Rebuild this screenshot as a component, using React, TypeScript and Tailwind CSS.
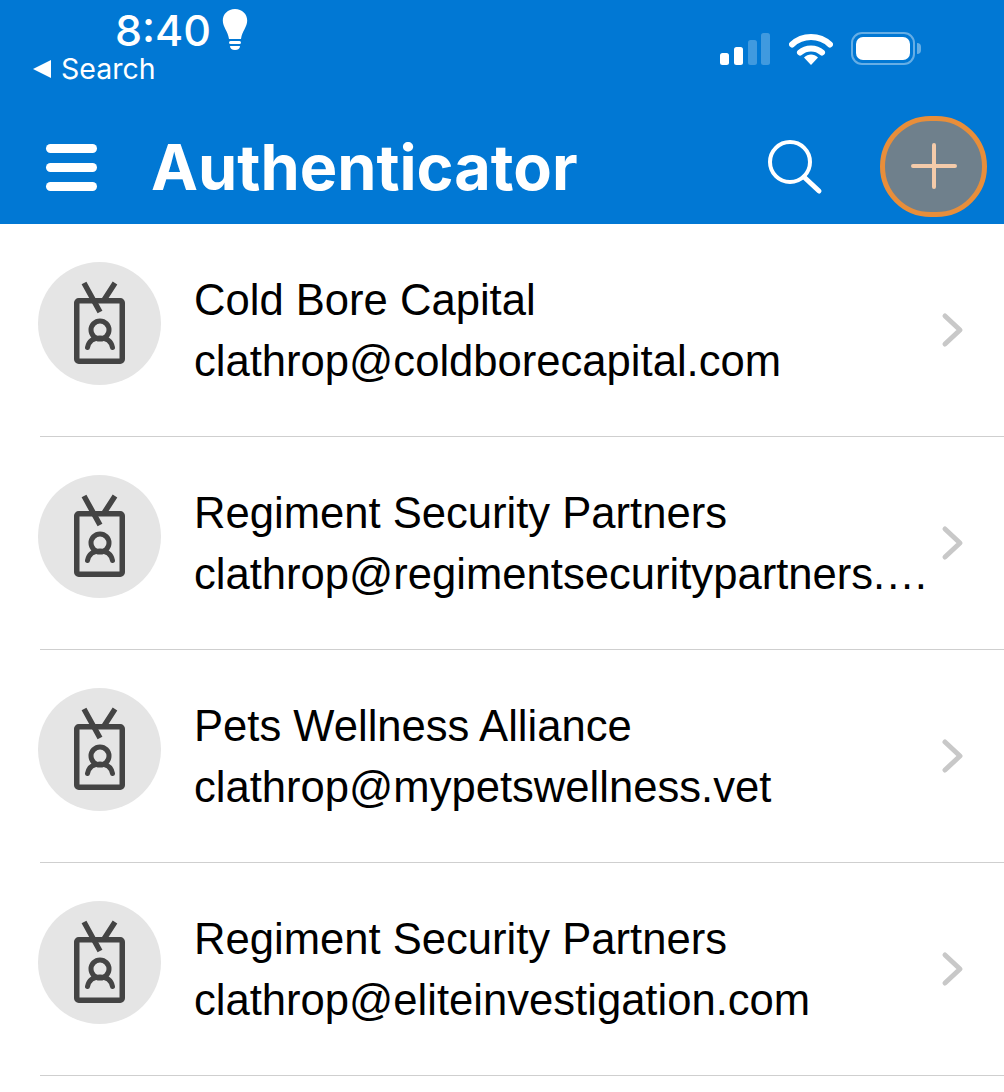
const accounts = [
    { name: 'Cold Bore Capital', email: 'clathrop@coldborecapital.com' },
    { name: 'Regiment Security Partners', email: 'clathrop@regimentsecuritypartners.com' },
    { name: 'Pets Wellness Alliance', email: 'clathrop@mypetswellness.vet' },
    { name: 'Regiment Security Partners', email: 'clathrop@eliteinvestigation.com' },
];

function Bulb() {
    return (
        <svg width="26" height="42" viewBox="0 0 26 42" className="block">
            <path d="M13 0C5.800 0 .8 5.200.8 11.600c0 6.600 5 10.400 6.200 18.400h12c1.200-8 6.200-11.800 6.200-18.400C25.200 5.200 20.200 0 13 0Z" fill="white" />
            <rect x="7" y="32" width="12" height="3" rx="1.500" fill="white" />
            <path d="M8 37h10c0 2.500-2 4-5 4s-5-1.500-5-4Z" fill="white" />
        </svg>
    );
}

function Signal() {
    return (
        <svg width="50" height="32" viewBox="0 0 50 32" className="block">
            <rect x="0" y="20" width="9" height="12" rx="2.500" fill="white" />
            <rect x="14" y="14" width="9" height="18" rx="2.500" fill="white" />
            <rect x="28" y="7" width="9" height="25" rx="2.500" fill="white" fillOpacity="0.25" />
            <rect x="41" y="0" width="9" height="32" rx="2.500" fill="white" fillOpacity="0.25" />
        </svg>
    );
}

function Wifi() {
    return (
        <svg width="44" height="33" viewBox="0 0 44 33" className="block">
            <path d="M3 12.500C13.500 2.500 30.500 2.500 41 12.500" fill="none" stroke="white" strokeWidth="6" strokeLinecap="round" />
            <path d="M11 20.500C17 15 27 15 33 20.500" fill="none" stroke="white" strokeWidth="6" strokeLinecap="round" />
            <path d="M15 25.500C19 21.500 25 21.500 29 25.500L22 33Z" fill="white" />
        </svg>
    );
}

function Battery() {
    return (
        <div className="flex items-center">
            <div className="flex h-[33px] w-[64px] items-center justify-center rounded-[11px] border-[2px] border-white/40">
                <div className="h-[23px] w-[54px] rounded-[7px] bg-white" />
            </div>
            <div className="ml-[2px] h-[11px] w-[4px] rounded-r-full bg-white/40" />
        </div>
    );
}

function BadgeIcon() {
    return (
        <svg width="123" height="123" viewBox="0 0 123 123" className="block">
            <circle cx="61.500" cy="61.500" r="61.500" fill="#e5e5e5" />
            <rect x="38.750" y="38.750" width="45.500" height="60.500" rx="2" fill="none" stroke="#444444" strokeWidth="5.500" strokeLinejoin="round" />
            <path d="M46 21 62 50M77 21 66 38" fill="none" stroke="#444444" strokeWidth="5.500" strokeLinecap="butt" />
            <circle cx="62" cy="68" r="9" fill="none" stroke="#444444" strokeWidth="5" />
            <path d="M49.500 85.500C51 78 56 76 62 76s11 2 12.500 9.500" fill="none" stroke="#444444" strokeWidth="5" strokeLinecap="round" />
        </svg>
    );
}

function AccountRow({ name, email }: { name: string; email: string }) {
    return (
        <div>
            <div className="flex h-[212px] pl-[38px] pt-[38px]">
                <BadgeIcon />
                <div className="ml-[33px] w-[736px] pt-[8px] font-['Liberation_Sans',sans-serif] text-[43.600px] leading-[61px] text-black">
                    <div className="truncate">{name}</div>
                    <div className="truncate">{email}</div>
                </div>
                <svg width="24" height="36" viewBox="0 0 24 36" className="mt-[50px] ml-[11px] block">
                    <path d="M4 4 19 18 4 32" fill="none" stroke="#c8c8c8" strokeWidth="5" strokeLinecap="round" strokeLinejoin="round" />
                </svg>
            </div>
            <div className="ml-[40px] h-px bg-[#cfcfcf]" />
        </div>
    );
}

export default function App() {
    return (
        <div className="h-[1092px] w-[1004px] overflow-hidden bg-white">
            <header className="h-[224px] bg-[#0178d4] text-white">
                <div className="flex h-[110px]">
                    <div className="w-[720px] pl-[33px] pt-[9px] font-['Inter',sans-serif]">
                        <div className="flex h-[42px] items-center pl-[82px]">
                            <span className="text-[43px] font-medium leading-none">8:40</span>
                            <span className="ml-[11px]">
                                <Bulb />
                            </span>
                        </div>
                        <div className="mt-px flex items-center">
                            <span className="h-0 w-0 border-y-[9px] border-r-[18px] border-y-transparent border-r-white" />
                            <span className="ml-[10px] text-[28.500px] leading-[34px]">Search</span>
                        </div>
                    </div>
                    <div className="flex h-[65px] items-end">
                        <Signal />
                        <span className="ml-[19px]">
                            <Wifi />
                        </span>
                        <span className="ml-[18px]">
                            <Battery />
                        </span>
                    </div>
                </div>
                <div className="flex h-[114px] items-center pl-[46px] pr-[17px]">
                    <div className="flex h-[47px] w-[51px] flex-col justify-between">
                        <div className="h-[9px] rounded-full bg-white" />
                        <div className="h-[9px] rounded-full bg-white" />
                        <div className="h-[9px] rounded-full bg-white" />
                    </div>
                    <h1 className="ml-[54px] font-['Inter',sans-serif] text-[63px] font-bold leading-none">Authenticator</h1>
                    <svg width="56" height="56" viewBox="0 0 56 56" className="ml-auto mr-[57px] block">
                        <circle cx="23" cy="23" r="20" fill="none" stroke="white" strokeWidth="4" />
                        <path d="M37 38 52 52" fill="none" stroke="white" strokeWidth="5" strokeLinecap="round" />
                    </svg>
                    <button className="mb-[2px] flex h-[101px] w-[107px] items-center justify-center rounded-full border-[5px] border-[#e88e3a] bg-[#6f808c]">
                        <svg width="46" height="46" viewBox="0 0 46 46" className="block">
                            <path d="M23 2V44M2 23H44" stroke="#f4cbaa" strokeWidth="4" strokeLinecap="round" />
                        </svg>
                    </button>
                </div>
            </header>
            {accounts.map((account, i) => (
                <AccountRow key={i} name={account.name} email={account.email} />
            ))}
        </div>
    );
}
